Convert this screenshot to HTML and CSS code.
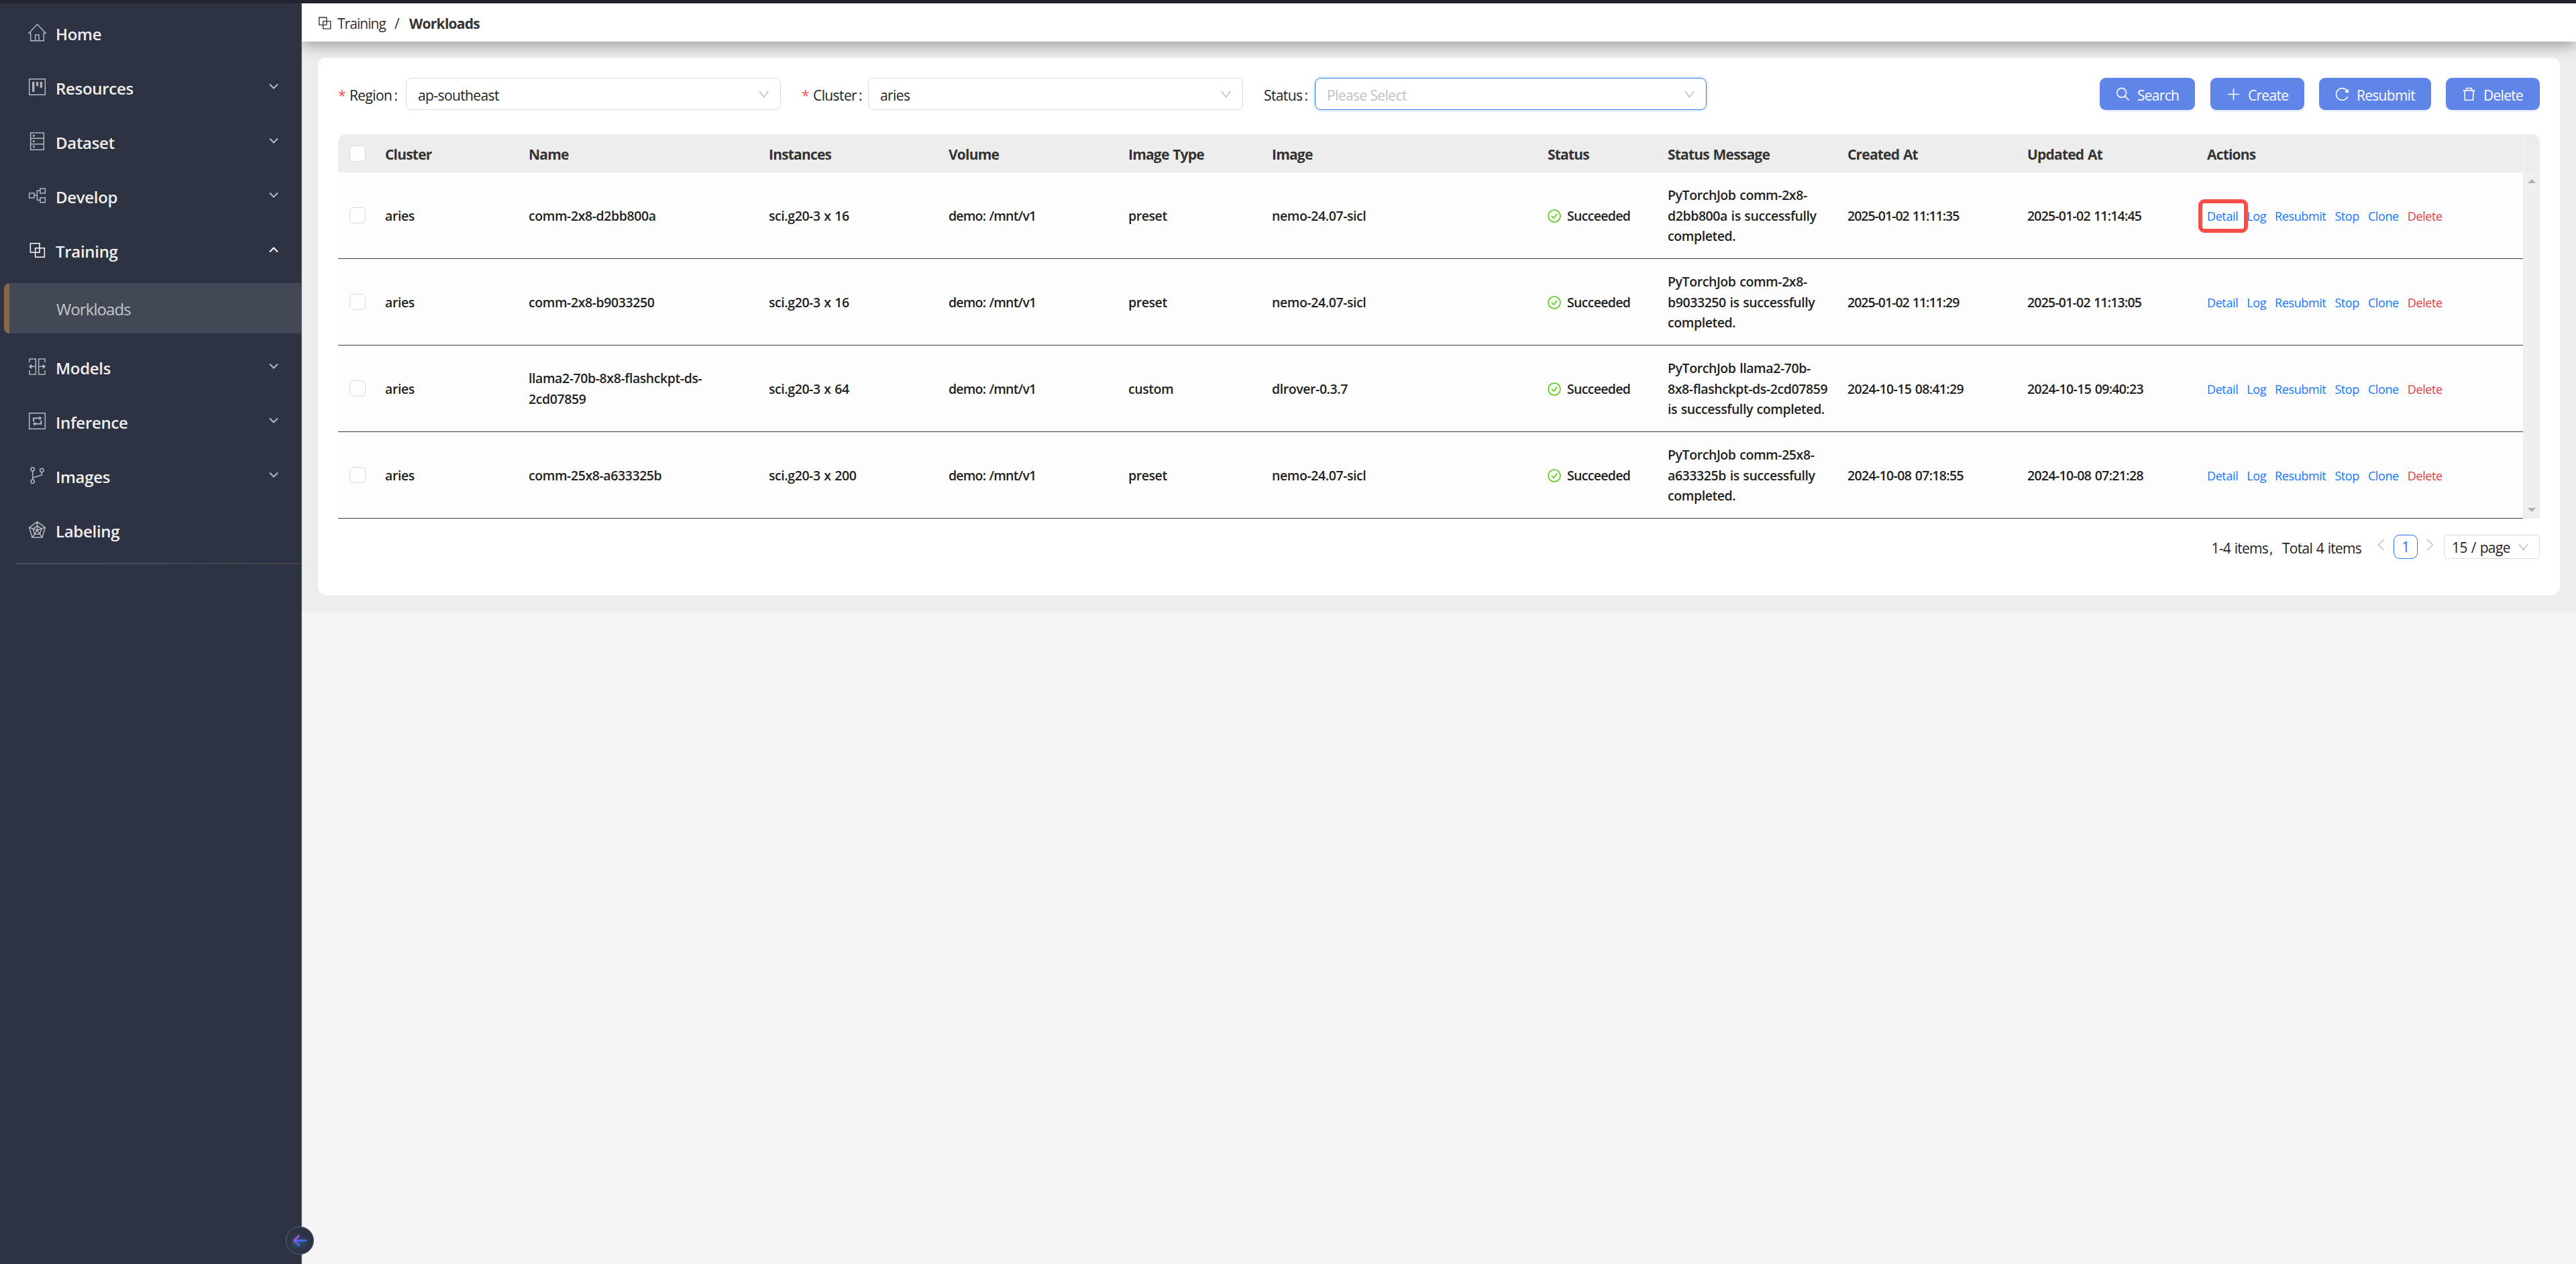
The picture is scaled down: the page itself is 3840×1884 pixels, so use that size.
FILE: index.html
```html
<!DOCTYPE html>
<html lang="en">
<head>
  <meta charset="UTF-8" />
  <title>Workloads</title>
  <link rel="stylesheet" href="styles.css">
</head>
<body>
  <!-- icon sprite -->
  <svg class="sprite">
    <symbol id="i-home" viewBox="0 0 81 81"><path d="M11 43H3L40.5 4 78 43H70V77H11ZM32 77V51H48V77"/></symbol>
    <symbol id="i-resources" viewBox="0 0 81 81"><path d="M5 5H76V76H5Z"/><path class="fill" d="M18 18H28V63H18ZM36 18H45V37H36ZM53 18H63V44H53Z"/></symbol>
    <symbol id="i-dataset" viewBox="0 0 81 81"><path d="M11 3H70V79H11ZM11 28H70M11 53H70"/><path class="fill" d="M21 12H29V20H21ZM21 37H29V45H21ZM21 61H29V69H21Z"/></symbol>
    <symbol id="i-develop" viewBox="0 0 81 81"><path d="M5 30H27V51H5ZM54 9H76V30H54ZM54 50H76V71H54ZM27 40H41M54 19H40V61H54"/></symbol>
    <symbol id="i-training" viewBox="0 0 81 81"><path d="M10 11H51V52H10ZM32 32H73V73H32Z"/></symbol>
    <symbol id="i-models" viewBox="0 0 81 81"><path d="M6 22V6H34V75H6V57M75 22V6H47V75H75V57M34 40H12M47 40H69"/><path class="fill" d="M2 40L16 29V51ZM79 40L65 29V51Z"/></symbol>
    <symbol id="i-inference" viewBox="0 0 81 81"><path d="M5 5H76V76H5Z"/><path d="M24 43V28H52M58 38V53H30" stroke-width="6"/><path class="fill" d="M61 28L50 18V38ZM21 53L32 43V63Z"/></symbol>
    <symbol id="i-images" viewBox="0 0 81 81"><circle cx="20" cy="13" r="8"/><circle cx="61" cy="18" r="8"/><circle cx="20" cy="68" r="8"/><path d="M20 21V60M61 26V39L20 52"/></symbol>
    <symbol id="i-labeling" viewBox="0 0 81 81"><path d="M40.5 5L76 31 63 75H18L5 31ZM40.5 23L60 37 52 61H29L21 37ZM40.5 43V5M40.5 43L76 31M40.5 43L63 75M40.5 43L18 75M40.5 43L5 31"/></symbol>
    <symbol id="i-down" viewBox="0 0 14 10"><path d="M1 1.5L7 7.5 13 1.5"/></symbol>
    <symbol id="i-angle" viewBox="0 0 16 12"><path d="M.8.8L8 10.6 15.2.8"/></symbol>
    <symbol id="i-left" viewBox="0 0 11 18"><path d="M10 1L1.5 9 10 17"/></symbol>
    <symbol id="i-search" viewBox="0 0 21 21"><circle cx="8.7" cy="8.3" r="6.9"/><path d="M13.6 13.2L19.6 19.4"/></symbol>
    <symbol id="i-plus" viewBox="0 0 21 21"><path d="M10.5 2V19M2 10.5H19"/></symbol>
    <symbol id="i-reload" viewBox="0 0 21 21"><path d="M18.6 14A8.9 8.9 0 1 1 17.6 5.2"/><path class="fill" d="M19.8 2.4V8.4L14 7.2Z"/></symbol>
    <symbol id="i-trash" viewBox="0 0 21 21"><path d="M1.5 5H19.5M6.5 5V1.5H14.5V5M3.7 5L4.6 19.3H16.4L17.3 5"/></symbol>
    <symbol id="i-check" viewBox="0 0 20 20"><circle cx="10" cy="10" r="9" fill="#f6ffed"/><path d="M6 10L9.2 13.2 14 6.8"/></symbol>
  </svg>

  <div class="topbar"></div>
  <div class="app">
    <aside class="sidebar">
      <nav>
        <a class="menu"><svg><use href="#i-home"/></svg><span>Home</span></a>
        <a class="menu"><svg><use href="#i-resources"/></svg><span>Resources</span><svg class="arrow"><use href="#i-down"/></svg></a>
        <a class="menu"><svg><use href="#i-dataset"/></svg><span>Dataset</span><svg class="arrow"><use href="#i-down"/></svg></a>
        <a class="menu"><svg><use href="#i-develop"/></svg><span>Develop</span><svg class="arrow"><use href="#i-down"/></svg></a>
        <a class="menu open"><svg><use href="#i-training"/></svg><span>Training</span><svg class="arrow"><use href="#i-down"/></svg></a>
        <a class="submenu">Workloads</a>
        <a class="menu"><svg><use href="#i-models"/></svg><span>Models</span><svg class="arrow"><use href="#i-down"/></svg></a>
        <a class="menu"><svg><use href="#i-inference"/></svg><span>Inference</span><svg class="arrow"><use href="#i-down"/></svg></a>
        <a class="menu"><svg><use href="#i-images"/></svg><span>Images</span><svg class="arrow"><use href="#i-down"/></svg></a>
        <a class="menu"><svg><use href="#i-labeling"/></svg><span>Labeling</span></a>
      </nav>
      <div class="divider"></div>
      <button class="collapse">
        <svg viewBox="0 0 22 18">
          <defs><linearGradient id="g" gradientUnits="userSpaceOnUse" x1="2" y1="2" x2="16" y2="14"><stop offset="0.2" stop-color="#a855d8"/><stop offset="0.65" stop-color="#3b6ef0"/></linearGradient></defs>
          <path d="M9.5 2L2.5 9 9.5 16M3 9.1L20 9" stroke="url(#g)"/>
        </svg>
      </button>
    </aside>

    <main class="main">
      <header class="header">
        <svg><use href="#i-training"/></svg>
        <span class="crumb">Training</span>
        <span class="slash">/</span>
        <b>Workloads</b>
      </header>

      <div class="content">
        <section class="card">
          <div class="filters">
            <label><i>*</i>Region<em>:</em></label>
            <div class="select"><span>ap-southeast</span><svg><use href="#i-angle"/></svg></div>
            <label class="cluster"><i>*</i>Cluster<em>:</em></label>
            <div class="select"><span>aries</span><svg><use href="#i-angle"/></svg></div>
            <label class="status">Status<em>:</em></label>
            <div class="select focus"><span>Please Select</span><svg><use href="#i-angle"/></svg></div>
            <div class="buttons">
              <button class="btn search"><svg><use href="#i-search"/></svg><span>Search</span></button>
              <button class="btn create"><svg><use href="#i-plus"/></svg><span>Create</span></button>
              <button class="btn resubmit"><svg><use href="#i-reload"/></svg><span>Resubmit</span></button>
              <button class="btn delete"><svg><use href="#i-trash"/></svg><span>Delete</span></button>
            </div>
          </div>

          <div class="table">
            <div class="row head">
              <div><span class="check"></span></div><div>Cluster</div><div>Name</div><div>Instances</div><div>Volume</div><div>Image Type</div><div>Image</div><div>Status</div><div>Status Message</div><div>Created At</div><div>Updated At</div><div>Actions</div><div class="gutter"></div>
            </div>
            <div class="body">
              <div class="rows">
                <div class="row">
                  <div><span class="check"></span></div><div>aries</div><div>comm-2x8-d2bb800a</div><div>sci.g20-3 x 16</div><div class="volume">demo: /mnt/v1</div><div>preset</div><div>nemo-24.07-sicl</div>
                  <div class="state"><svg><use href="#i-check"/></svg>Succeeded</div><div>PyTorchJob comm-2x8-<br>d2bb800a is successfully<br>completed.</div>
                  <div class="date tight">2025-01-02 11:11:35</div><div class="date snug">2025-01-02 11:14:45</div>
                  <div class="actions"><a class="marked">Detail</a><a>Log</a><a>Resubmit</a><a>Stop</a><a>Clone</a><a class="danger">Delete</a></div>
                </div>
                <div class="row">
                  <div><span class="check"></span></div><div>aries</div><div>comm-2x8-b9033250</div><div>sci.g20-3 x 16</div><div class="volume">demo: /mnt/v1</div><div>preset</div><div>nemo-24.07-sicl</div>
                  <div class="state"><svg><use href="#i-check"/></svg>Succeeded</div><div>PyTorchJob comm-2x8-<br>b9033250 is successfully<br>completed.</div>
                  <div class="date tight">2025-01-02 11:11:29</div><div class="date snug">2025-01-02 11:13:05</div>
                  <div class="actions"><a>Detail</a><a>Log</a><a>Resubmit</a><a>Stop</a><a>Clone</a><a class="danger">Delete</a></div>
                </div>
                <div class="row">
                  <div><span class="check"></span></div><div>aries</div><div>llama2-70b-8x8-flashckpt-ds-<br>2cd07859</div><div>sci.g20-3 x 64</div><div class="volume">demo: /mnt/v1</div><div>custom</div><div>dlrover-0.3.7</div>
                  <div class="state"><svg><use href="#i-check"/></svg>Succeeded</div><div>PyTorchJob llama2-70b-<br>8x8-flashckpt-ds-2cd07859<br>is successfully completed.</div>
                  <div class="date">2024-10-15 08:41:29</div><div class="date">2024-10-15 09:40:23</div>
                  <div class="actions"><a>Detail</a><a>Log</a><a>Resubmit</a><a>Stop</a><a>Clone</a><a class="danger">Delete</a></div>
                </div>
                <div class="row">
                  <div><span class="check"></span></div><div>aries</div><div>comm-25x8-a633325b</div><div>sci.g20-3 x 200</div><div class="volume">demo: /mnt/v1</div><div>preset</div><div>nemo-24.07-sicl</div>
                  <div class="state"><svg><use href="#i-check"/></svg>Succeeded</div><div>PyTorchJob comm-25x8-<br>a633325b is successfully<br>completed.</div>
                  <div class="date">2024-10-08 07:18:55</div><div class="date">2024-10-08 07:21:28</div>
                  <div class="actions"><a>Detail</a><a>Log</a><a>Resubmit</a><a>Stop</a><a>Clone</a><a class="danger">Delete</a></div>
                </div>
              </div>
              <div class="scrollbar"><span class="up"></span><span class="down"></span></div>
            </div>
          </div>

          <div class="pagination">
            <span class="total">1-4 items<span class="comma">,</span>Total 4 items</span>
            <svg><use href="#i-left"/></svg>
            <span class="page">1</span>
            <svg class="next"><use href="#i-left"/></svg>
            <div class="size"><span>15 / page</span><svg><use href="#i-angle"/></svg></div>
          </div>
        </section>
      </div>
    </main>
  </div>
</body>
</html>
```
FILE: styles.css
```css
*, *::after { box-sizing: border-box; }
body { margin: 0; height: 1884px; overflow: hidden; background: #f4f4f4; color: #1f1f1f; font-family: "Open Sans", "Noto Sans", sans-serif; font-size: 21px; letter-spacing: -0.6px; }
svg { flex: none; fill: none; stroke: currentColor; }
.fill { fill: currentColor; stroke: none; }
.sprite { display: none; }

.topbar { height: 5px; background: #232630; }
.app { display: flex; height: 1879px; }

/* sidebar */
.sidebar { position: relative; z-index: 2; width: 450px; padding-top: 5px; background: #2d3342; border-right: 1px solid #596070; }
.menu { display: flex; align-items: center; height: 81px; padding: 0 34px 0 42px; color: #efefef; font-size: 24px; font-weight: 600; letter-spacing: -0.3px; }
.menu span { flex: 1; }
.menu svg { width: 27px; height: 27px; margin: -4px 14px 0 0; color: #b4b7be; stroke-width: 4.5; }
.menu .arrow { width: 14px; height: 10px; margin: -6px 0 0; stroke-width: 2; }
.open svg { color: #fff; }
.open .arrow { transform: rotate(180deg); margin-top: -5px; }
.submenu { display: flex; align-items: center; height: 75px; margin: 7px 0 11px 6px; padding: 2px 0 0 70px; background: #434855; border-left: 8px solid #8a6547; border-radius: 8px 0 0 8px; color: #c5c7cb; font-size: 24px; letter-spacing: -0.9px; }
.divider { height: 2px; margin: 7px 0 0 24px; background: linear-gradient(90deg, #464c5c, #454a57 50%, #454347); }
.collapse { position: absolute; right: -19px; bottom: 14px; display: flex; align-items: center; justify-content: center; width: 42px; height: 42px; padding: 0; border: 1px solid #5d6372; border-radius: 50%; background: #2d3342; }
.collapse svg { width: 22px; height: 18px; stroke-width: 2.8; stroke-linecap: round; stroke-linejoin: round; filter: drop-shadow(0 3px 4px rgba(80, 150, 230, 0.7)); }

/* header */
.main { flex: 1; min-width: 0; }
.header { position: relative; display: flex; align-items: center; height: 57px; padding: 2px 0 0 23px; background: #fff; box-shadow: 0 6px 21px rgba(0, 0, 0, 0.34); color: #333; }
.header svg { width: 22px; height: 22px; margin: -2px 8px 0 0; stroke-width: 5; }
.header .crumb { width: 73px; letter-spacing: -0.95px; }
.header .slash { width: 34px; padding-left: 12px; }
.header b { letter-spacing: -0.74px; }

.content { padding: 24px; background: #ededed; }
.card { height: 801px; padding: 30px; background: #fff; border-radius: 12px; }

/* filters */
.filters { display: flex; align-items: center; height: 48px; }
.filters label { display: flex; width: 101px; padding-top: 3px; }
.filters label i { width: 17px; color: #ff4d4f; font-style: normal; }
.filters label em { margin-left: 3px; font-style: normal; }
.filters .cluster { width: 99px; margin-left: 31px; }
.filters .status { width: 76px; margin-left: 31px; }
.select { display: flex; align-items: center; justify-content: space-between; width: 559px; height: 48px; padding: 0 17px 0 17px; border: 1.5px solid #d9d9d9; border-radius: 9px; }
.select span, .btn span { padding-top: 3px; }
.select svg, .size svg { width: 15px; height: 11px; color: #bfbfbf; stroke-width: 1.6; }
.focus { width: 584px; border-color: #2c74f5; box-shadow: 0 0 0 3px #edf5ff; color: #bfbfbf; }
.buttons { display: flex; margin-left: auto; gap: 22px; }
.btn { display: flex; align-items: center; height: 48px; padding: 0 0 0 24px; border: 0; border-radius: 9px; background: #6085e8; box-shadow: 0 3px 0 #eef4ff; color: #fff; font: inherit; letter-spacing: -0.72px; }
.btn svg { width: 21px; height: 21px; margin-right: 11px; stroke-width: 1.6; }
.search { width: 142px; margin-right: 1px; }
.create { width: 140px; }
.resubmit { width: 167px; }
.delete { width: 140px; }

/* table */
.table { margin-top: 36px; font-size: 19.5px; font-weight: 600; letter-spacing: -0.42px; line-height: 30.6px; word-spacing: 1px; }
.row { display: grid; grid-template-columns: 58px 214px 358px 268px 268px 214px 411px 179px 268px 268px 268px 483px; align-items: center; height: 129px; background: #fdfdfd; border-bottom: 1px solid #3c3c3c; white-space: nowrap; }
.row > div { padding: 2px 0 0 12px; }
.head { grid-template-columns: 58px 214px 358px 268px 268px 214px 411px 179px 268px 268px 268px 483px 25px; height: 57px; border: 0; border-radius: 12px 12px 0 0; background: #ededed; color: #333; font-size: 21px; font-weight: 700; letter-spacing: -0.8px; }
.head > div { padding-top: 3px; }
.row > div:first-child { padding: 0 0 0 17px; }
.head .gutter { align-self: stretch; border-left: 1px solid #f6f6f6; }
.check { display: block; width: 24px; height: 24px; border: 1.5px solid #d9d9d9; border-radius: 6px; background: #fff; }
.body { display: flex; }
.rows { width: 3257px; }
.state { display: flex; align-items: center; letter-spacing: -0.7px; }
.state svg { width: 20px; height: 20px; margin: -1px 9px 0 0; color: #52c41a; stroke-width: 1.5; }
.volume { letter-spacing: -0.8px; }
.date { letter-spacing: -0.65px; }
.snug { letter-spacing: -0.8px; }
.tight { letter-spacing: -1px; }
.actions { display: flex; gap: 13px; font-size: 18px; font-weight: 500; letter-spacing: -0.4px; }
.actions a { position: relative; color: #1677ff; }
.actions .danger { color: #e8384a; }
.marked::after { content: ""; position: absolute; left: -13px; top: -10px; width: 74px; height: 50px; border: 6px solid #f94d48; border-radius: 9px; }
.scrollbar { display: flex; flex-direction: column; align-items: center; justify-content: space-between; width: 25px; padding: 10px 0; background: #eef0f0; }
.up, .down { border: 6px solid transparent; border-top: 0; border-bottom: 6px solid #b0b0b0; }
.down { border-top: 6px solid #b0b0b0; border-bottom: 0; }

/* pagination */
.pagination { display: flex; align-items: center; justify-content: flex-end; height: 36px; margin-top: 24px; letter-spacing: -0.74px; }
.total { padding-top: 3px; word-spacing: 1px; }
.comma { display: inline-block; width: 21px; padding-left: 2px; }
.pagination > svg { width: 11px; height: 18px; margin: -6px 13px 0 24px; color: #bfbfbf; stroke-width: 1.5; }
.pagination .next { transform: rotate(180deg); margin: -6px 15px 0 13px; }
.page { width: 36px; height: 36px; border: 1.5px solid #2c74f5; border-radius: 9px; color: #1677ff; text-align: center; line-height: 35px; }
.size { display: flex; align-items: center; justify-content: space-between; width: 143px; height: 36px; padding: 0 16px 0 11px; border: 1.5px solid #d9d9d9; border-radius: 6px; letter-spacing: -0.6px; word-spacing: 1px; }
.size span { padding-top: 1px; }
```
